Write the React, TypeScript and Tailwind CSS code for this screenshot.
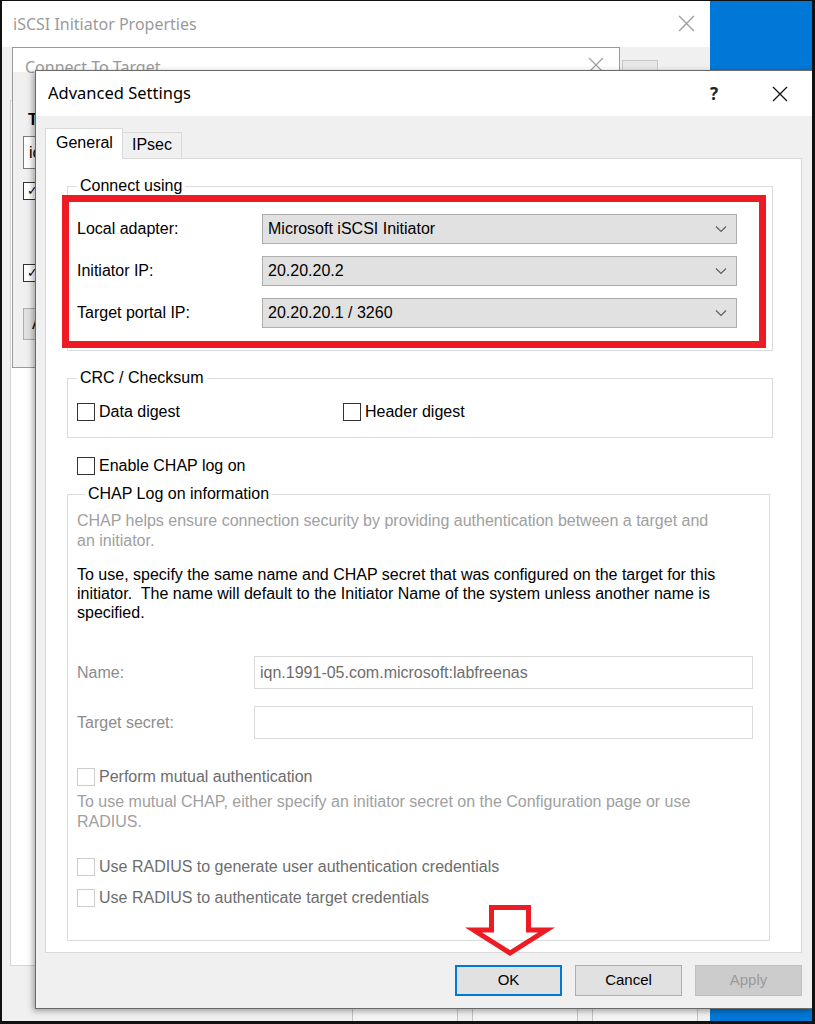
import React from "react";

function XIcon({ color = "#000", size = 16 }: { color?: string; size?: number }) {
  return (
    <svg width={size} height={size} viewBox="0 0 16 16">
      <path d="M1 1 L15 15 M15 1 L1 15" stroke={color} strokeWidth="1.3" fill="none" />
    </svg>
  );
}

function Chevron() {
  return (
    <svg width="12" height="8" viewBox="0 0 12 8">
      <path d="M1 1.5 L6 6.5 L11 1.5" stroke="#5f5f5f" strokeWidth="1.2" fill="none" />
    </svg>
  );
}

function Combo({ text }: { text: string }) {
  return (
    <div className="flex items-center h-[30px] w-[475px] bg-[#e1e1e1] border border-[#adadad] pl-[5px] pr-[9px]">
      <span className="flex-1 text-black">{text}</span>
      <Chevron />
    </div>
  );
}

function Check({ label, disabled }: { label: string; disabled?: boolean }) {
  return (
    <div className="flex items-center h-[20px] gap-[4px]">
      <span
        className={
          disabled
            ? "w-[18px] h-[18px] border border-[#cccccc] bg-white"
            : "w-[18px] h-[18px] border border-[#333333] bg-white"
        }
      />
      <span className={disabled ? "text-[#6d6d6d]" : "text-black"}>{label}</span>
    </div>
  );
}

function Row({ label, text }: { label: string; text: string }) {
  return (
    <div className="flex items-center">
      <span className="w-[185px] text-black">{label}</span>
      <Combo text={text} />
    </div>
  );
}

export default function App() {
  return (
    <div className="relative w-[815px] h-[1024px] overflow-hidden bg-[#0078d7] font-['Liberation_Sans',Arial,sans-serif] text-[16px]">
      {/* iSCSI Initiator Properties (background window) */}
      <div className="absolute left-0 top-0 w-[710px] h-[1024px] bg-[#f0f0f0]">
        <div className="h-[47px] bg-white flex items-center justify-between pl-[13px] pr-[15px] font-['Noto_Sans',sans-serif] text-[16px] text-[#9a9a9a]">
          <span>iSCSI Initiator Properties</span>
          <XIcon color="#a0a0a0" size={17} />
        </div>
        <div className="absolute left-[10px] top-[100px] w-[690px] h-[866px] bg-white border border-[#d4d4d4]" />
        <div className="absolute left-[622px] top-[60px] w-[36px] h-[30px] border border-[#c8c8c8] bg-[#e8e8e8]" />
        <div className="absolute left-[352px] top-[1008px] w-[106px] h-[30px] border border-[#c4c4c4] bg-[#f4f4f4]" />
        <div className="absolute left-[472px] top-[1008px] w-[106px] h-[30px] border border-[#c4c4c4] bg-[#f4f4f4]" />
        <div className="absolute left-[592px] top-[1008px] w-[106px] h-[30px] border border-[#c4c4c4] bg-[#f4f4f4]" />
      </div>

      {/* Connect To Target (background window) */}
      <div className="absolute left-[12px] top-[47px] w-[608px] h-[321px] bg-[#f0f0f0] border border-[#9a9a9a]">
        <div className="h-[24px] bg-white flex items-start justify-between pl-[12px] pr-[15px] pt-[9px] font-['Noto_Sans',sans-serif] text-[16px] text-[#9a9a9a] overflow-visible">
          <span className="leading-[20px]">Connect To Target</span>
          <XIcon color="#a0a0a0" size={16} />
        </div>
        <div className="absolute left-0 top-[24px] w-[23px] h-[296px] overflow-hidden">
          <div className="absolute left-[15px] top-[36px] text-black font-bold">T</div>
          <div className="absolute left-[10px] top-[64px] w-[300px] h-[33px] bg-white border border-[#7a7a7a] pl-[5px] leading-[31px]">ic</div>
          <div className="absolute left-[10px] top-[110px] w-[18px] h-[18px] border border-[#333] bg-white flex items-center justify-center text-[13px]">✓</div>
          <div className="absolute left-[10px] top-[192px] w-[18px] h-[18px] border border-[#333] bg-white flex items-center justify-center text-[13px]">✓</div>
          <div className="absolute left-[10px] top-[236px] w-[106px] h-[32px] border border-[#adadad] bg-[#e1e1e1] pl-[8px] leading-[30px]">A</div>
        </div>
      </div>

      {/* Advanced Settings dialog */}
      <div className="absolute left-[35px] top-[70px] w-[778px] h-[939px] flex flex-col border border-[#6a6a6a] bg-[#f0f0f0] shadow-[-2px_2px_6px_rgba(0,0,0,0.35)]">
        <div className="h-[45px] bg-white flex items-center pl-[12px] pr-[24px] font-['Noto_Sans',sans-serif] text-[16.5px] text-black">
          <span className="flex-1">Advanced Settings</span>
          <span className="mr-[54px] font-bold text-[17px] text-[#222]">?</span>
          <XIcon color="#111" size={16} />
        </div>
        <div className="flex-1 flex flex-col pl-[9px] pr-[10px] pt-[12px]">
          {/* tabs */}
          <div className="flex items-end h-[30px]">
            <div className="relative z-10 h-[31px] -mb-px w-[78px] bg-white border border-b-0 border-[#d9d9d9] pl-[10px] pt-[3px] leading-[22px]">General</div>
            <div className="h-[26px] w-[59px] bg-[#f0f0f0] border border-l-0 border-b-0 border-[#d9d9d9] pl-[9px] leading-[24px]">IPsec</div>
          </div>
          <div className="h-[795px] bg-white border border-[#d9d9d9] pl-[21px] pr-[28px] pt-[17px] flex flex-col">
            <fieldset className="border border-[#dcdcdc] px-[9px] pb-[22px]">
              <legend className="px-[3px] leading-[20px] text-black">Connect using</legend>
              <div className="flex flex-col gap-[12px] pt-[18px]">
                <Row label="Local adapter:" text="Microsoft iSCSI Initiator" />
                <Row label="Initiator IP:" text="20.20.20.2" />
                <Row label="Target portal IP:" text="20.20.20.1 / 3260" />
              </div>
            </fieldset>

            <fieldset className="mt-[17px] border border-[#dcdcdc] px-[9px] pb-[15px]">
              <legend className="px-[3px] leading-[20px] text-black">CRC / Checksum</legend>
              <div className="flex pt-[14px]">
                <div className="w-[266px]">
                  <Check label="Data digest" />
                </div>
                <Check label="Header digest" />
              </div>
            </fieldset>

            <div className="mt-[18px] ml-[10px]">
              <Check label="Enable CHAP log on" />
            </div>

            <fieldset className="mt-[8px] mr-[3px] border border-[#dcdcdc] px-[9px] pb-[32px]">
              <legend className="ml-[8px] px-[3px] leading-[20px] text-black">CHAP Log on information</legend>
              <div className="pt-[7px] leading-[20px] text-[#a0a0a0]">
                CHAP helps ensure connection security by providing authentication between a target and
                <br />
                an initiator.
              </div>
              <div className="mt-[14px] leading-[19px] text-black">
                To use, specify the same name and CHAP secret that was configured on the target for this
                <br />
                initiator.&nbsp; The name will default to the Initiator Name of the system unless another name is
                <br />
                specified.
              </div>
              <div className="mt-[34px] flex items-center">
                <span className="w-[177px] text-[#8c8c8c]">Name:</span>
                <div className="h-[33px] w-[499px] border border-[#d9d9d9] bg-white pl-[5px] leading-[31px] text-[#6d6d6d]">
                  iqn.1991-05.com.microsoft:labfreenas
                </div>
              </div>
              <div className="mt-[17px] flex items-center">
                <span className="w-[177px] text-[#8c8c8c]">Target secret:</span>
                <div className="h-[33px] w-[499px] border border-[#d9d9d9] bg-white" />
              </div>
              <div className="mt-[28px]">
                <Check label="Perform mutual authentication" disabled />
              </div>
              <div className="mt-[5px] leading-[20px] text-[#a0a0a0]">
                To use mutual CHAP, either specify an initiator secret on the Configuration page or use
                <br />
                RADIUS.
              </div>
              <div className="mt-[25px]">
                <Check label="Use RADIUS to generate user authentication credentials" disabled />
              </div>
              <div className="mt-[11px]">
                <Check label="Use RADIUS to authenticate target credentials" disabled />
              </div>
            </fieldset>
          </div>

          {/* buttons */}
          <div className="mt-[12px] flex justify-end gap-[13px] text-[15px]">
            <div className="h-[31px] w-[107px] border-2 border-[#0078d7] bg-[#e1e1e1] flex items-center justify-center text-black">OK</div>
            <div className="h-[31px] w-[107px] border border-[#adadad] bg-[#e1e1e1] flex items-center justify-center text-black">Cancel</div>
            <div className="h-[31px] w-[107px] border border-[#bfbfbf] bg-[#cccccc] flex items-center justify-center text-[#9a9a9a]">Apply</div>
          </div>
        </div>
      </div>

      {/* red annotation rectangle */}
      <div className="absolute left-[62px] top-[195px] w-[704px] h-[153px] border-[7px] border-[#ed1c24] pointer-events-none" />

      {/* red annotation arrow */}
      <svg className="absolute left-[465px] top-[900px] pointer-events-none" width="90" height="62" viewBox="0 0 90 62">
        <polygon
          points="26.5,7.5 63.5,7.5 63.5,30 81.5,30 45,53 8.5,30 26.5,30"
          fill="none"
          stroke="#ed1c24"
          strokeWidth="5"
          strokeLinejoin="miter"
        />
      </svg>

      {/* screenshot frame */}
      <div className="absolute inset-0 border-t-[1px] border-l-[2px] border-r-[3px] border-b-[3px] border-[#111] pointer-events-none" />
    </div>
  );
}
